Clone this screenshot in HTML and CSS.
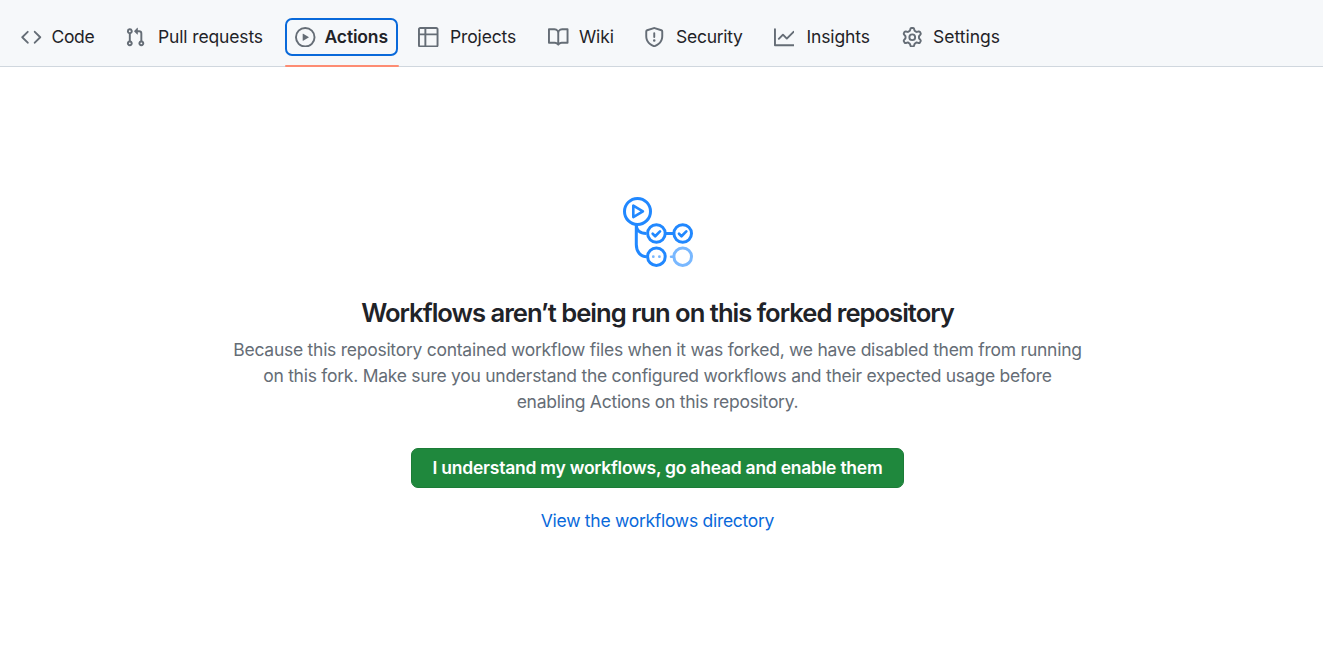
FILE: index.html
```html
<!DOCTYPE html>
<html lang="en">
<head>
<meta charset="utf-8">
<title>Actions</title>
<link rel="stylesheet" href="styles.css">
</head>
<body>
<nav class="tabs">
  <a class="tab tab-code"><svg class="icon" viewBox="0 0 16 16"><path d="m11.28 3.22 4.25 4.25a.75.75 0 0 1 0 1.06l-4.25 4.25a.749.749 0 0 1-1.275-.326.749.749 0 0 1 .215-.734L13.94 8l-3.72-3.72a.749.749 0 0 1 .326-1.275.749.749 0 0 1 .734.215Zm-6.56 0a.751.751 0 0 1 1.042.018.751.751 0 0 1 .018 1.042L2.06 8l3.72 3.72a.749.749 0 0 1-.326 1.275.749.749 0 0 1-.734-.215L.47 8.53a.75.75 0 0 1 0-1.06Z"/></svg><span class="label">Code</span></a>
  <a class="tab tab-pulls"><svg class="icon" viewBox="0 0 16 16"><path d="M1.5 3.25a2.25 2.25 0 1 1 3 2.122v5.256a2.251 2.251 0 1 1-1.5 0V5.372A2.25 2.25 0 0 1 1.5 3.25Zm5.677-.177L9.573.677A.25.25 0 0 1 10 .854V2.5h1A2.5 2.5 0 0 1 13.5 5v5.628a2.251 2.251 0 1 1-1.5 0V5a1 1 0 0 0-1-1h-1v1.646a.25.25 0 0 1-.427.177L7.177 3.427a.25.25 0 0 1 0-.354ZM3.75 2.5a.75.75 0 1 0 0 1.5.75.75 0 0 0 0-1.5Zm0 9.5a.75.75 0 1 0 0 1.5.75.75 0 0 0 0-1.5Zm8.25.75a.75.75 0 1 0 1.5 0 .75.75 0 0 0-1.5 0Z"/></svg><span class="label">Pull requests</span></a>
  <a class="tab tab-actions selected"><svg class="icon" viewBox="0 0 16 16"><path d="M8 0a8 8 0 1 1 0 16A8 8 0 0 1 8 0ZM1.5 8a6.5 6.5 0 1 0 13 0 6.5 6.5 0 0 0-13 0Zm4.879-2.773 4.264 2.559a.25.25 0 0 1 0 .428l-4.264 2.559A.25.25 0 0 1 6 10.559V5.442a.25.25 0 0 1 .379-.215Z"/></svg><span class="label">Actions</span></a>
  <a class="tab tab-projects"><svg class="icon" viewBox="0 0 16 16"><path d="M0 1.75C0 .784.784 0 1.75 0h12.5C15.216 0 16 .784 16 1.75v12.5A1.75 1.75 0 0 1 14.25 16H1.75A1.75 1.75 0 0 1 0 14.25ZM6.5 6.5v8h7.75a.25.25 0 0 0 .25-.25V6.5Zm8-1.5V1.75a.25.25 0 0 0-.25-.25H6.5V5Zm-13 1.5v7.75c0 .138.112.25.25.25H5v-8ZM5 5V1.5H1.75a.25.25 0 0 0-.25.25V5Z"/></svg><span class="label">Projects</span></a>
  <a class="tab tab-wiki"><svg class="icon" viewBox="0 0 16 16"><path d="M0 1.75A.75.75 0 0 1 .75 1h4.253c1.227 0 2.317.59 3 1.501A3.743 3.743 0 0 1 11.006 1h4.245a.75.75 0 0 1 .75.75v10.5a.75.75 0 0 1-.75.75h-4.507a2.25 2.25 0 0 0-1.591.659l-.622.621a.75.75 0 0 1-1.06 0l-.622-.621A2.25 2.25 0 0 0 5.258 13H.75a.75.75 0 0 1-.75-.75Zm7.251 10.324.004-5.073-.002-2.253A2.25 2.25 0 0 0 5.003 2.5H1.5v9h3.757a3.75 3.75 0 0 1 1.994.574ZM8.755 4.75l-.004 7.322a3.752 3.752 0 0 1 1.992-.572H14.5v-9h-3.495a2.25 2.25 0 0 0-2.25 2.25Z"/></svg><span class="label">Wiki</span></a>
  <a class="tab tab-security"><svg class="icon" viewBox="0 0 16 16"><path d="M7.467.133a1.748 1.748 0 0 1 1.066 0l5.25 1.68A1.75 1.75 0 0 1 15 3.48V7c0 1.566-.32 3.182-1.303 4.682-.983 1.498-2.585 2.813-5.032 3.855a1.697 1.697 0 0 1-1.33 0c-2.447-1.042-4.049-2.357-5.032-3.855C1.32 10.182 1 8.566 1 7V3.48a1.75 1.75 0 0 1 1.217-1.667Zm.61 1.429a.25.25 0 0 0-.153 0l-5.25 1.68a.25.25 0 0 0-.174.238V7c0 1.358.275 2.666 1.057 3.86.784 1.194 2.121 2.34 4.366 3.297a.196.196 0 0 0 .154 0c2.245-.956 3.582-2.104 4.366-3.298C13.225 9.666 13.5 8.36 13.5 7V3.48a.251.251 0 0 0-.174-.237l-5.25-1.68ZM8.75 4.75v3a.75.75 0 0 1-1.5 0v-3a.75.75 0 0 1 1.5 0ZM9 10.5a1 1 0 1 1-2 0 1 1 0 0 1 2 0Z"/></svg><span class="label">Security</span></a>
  <a class="tab tab-insights"><svg class="icon" viewBox="0 0 16 16"><path d="M1.5 1.75V13.5h13.75a.75.75 0 0 1 0 1.5H.75a.75.75 0 0 1-.75-.75V1.75a.75.75 0 0 1 1.5 0Zm14.28 2.53-5.25 5.25a.75.75 0 0 1-1.06 0L7 7.06 4.28 9.78a.751.751 0 0 1-1.042-.018.751.751 0 0 1-.018-1.042l3.25-3.25a.75.75 0 0 1 1.06 0L10 7.94l4.72-4.72a.751.751 0 0 1 1.042.018.751.751 0 0 1 .018 1.042Z"/></svg><span class="label">Insights</span></a>
  <a class="tab tab-settings"><svg class="icon" viewBox="0 0 16 16"><path d="M8 0a8.2 8.2 0 0 1 .701.031C9.444.095 9.99.645 10.16 1.29l.288 1.107c.018.066.079.158.212.224.231.114.454.243.668.386.123.082.233.09.299.071l1.103-.303c.644-.176 1.392.021 1.82.63.27.385.506.792.704 1.218.315.675.111 1.422-.364 1.891l-.814.806c-.049.048-.098.147-.088.294.016.257.016.515 0 .772-.01.147.038.246.088.294l.814.806c.475.469.679 1.216.364 1.891a7.977 7.977 0 0 1-.704 1.217c-.428.61-1.176.807-1.82.63l-1.102-.302c-.067-.019-.177-.011-.3.071a5.909 5.909 0 0 1-.668.386c-.133.066-.194.158-.211.224l-.29 1.106c-.168.646-.715 1.196-1.458 1.26a8.006 8.006 0 0 1-1.402 0c-.743-.064-1.289-.614-1.458-1.26l-.289-1.106c-.018-.066-.079-.158-.212-.224a5.738 5.738 0 0 1-.668-.386c-.123-.082-.233-.09-.299-.071l-1.103.303c-.644.176-1.392-.021-1.82-.63a8.12 8.12 0 0 1-.704-1.218c-.315-.675-.111-1.422.363-1.891l.815-.806c.05-.048.098-.147.088-.294a6.214 6.214 0 0 1 0-.772c.01-.147-.038-.246-.088-.294l-.815-.806C.635 6.045.431 5.298.746 4.623a7.92 7.92 0 0 1 .704-1.217c.428-.61 1.176-.807 1.82-.63l1.102.302c.067.019.177.011.3-.071.214-.143.437-.272.668-.386.133-.066.194-.158.211-.224l.29-1.106C6.009.645 6.556.095 7.299.03 7.53.01 7.764 0 8 0Zm-.571 1.525c-.036.003-.108.036-.137.146l-.289 1.105c-.147.561-.549.967-.998 1.189-.173.086-.34.183-.5.29-.417.278-.97.423-1.529.27l-1.103-.303c-.109-.03-.175.016-.195.045-.22.312-.412.644-.573.99-.014.031-.021.11.059.19l.815.806c.411.406.562.957.53 1.456a4.709 4.709 0 0 0 0 .582c.032.499-.119 1.05-.53 1.456l-.815.806c-.081.08-.073.159-.059.19.162.346.353.677.573.989.02.03.085.076.195.046l1.102-.303c.56-.153 1.113-.008 1.53.27.161.107.328.204.501.29.447.222.85.629.997 1.189l.289 1.105c.029.109.101.143.137.146a6.6 6.6 0 0 0 1.142 0c.036-.003.108-.036.137-.146l.289-1.105c.147-.561.549-.967.998-1.189.173-.086.34-.183.5-.29.417-.278.97-.423 1.529-.27l1.103.303c.109.029.175-.016.195-.045.22-.313.411-.644.573-.99.014-.031.021-.11-.059-.19l-.815-.806c-.411-.406-.562-.957-.53-1.456a4.709 4.709 0 0 0 0-.582c-.032-.499.119-1.05.53-1.456l.815-.806c.081-.08.073-.159.059-.19a6.464 6.464 0 0 0-.573-.989c-.02-.03-.085-.076-.195-.046l-1.102.303c-.56.153-1.113.008-1.53-.27a4.44 4.44 0 0 0-.501-.29c-.447-.222-.85-.629-.997-1.189l-.289-1.105c-.029-.11-.101-.143-.137-.146a6.6 6.6 0 0 0-1.142 0ZM11 8a3 3 0 1 1-6 0 3 3 0 0 1 6 0ZM9.5 8a1.5 1.5 0 1 0-3.001.001A1.5 1.5 0 0 0 9.5 8Z"/></svg><span class="label">Settings</span></a>
</nav>
<main class="blank">
  <svg class="logo" viewBox="0 0 72 72" fill="none" stroke="#2188ff" stroke-width="3" stroke-linecap="round" stroke-linejoin="round">
    <circle cx="15.5" cy="15.4" r="13"/>
    <path d="M11.3 9.7v11.4l9.6-5.7z" stroke-width="2.6"/>
    <path d="M14.3 29v19.5c0 7 4 12.2 10.5 12.2M14.3 29c0 5 3.5 8.5 10 8.5M44 37.5h7" stroke-linecap="butt"/>
    <circle cx="34.4" cy="37.5" r="8.8"/>
    <circle cx="60.7" cy="37.5" r="8.8"/>
    <circle cx="34.4" cy="60.7" r="8.8"/>
    <path d="M30.7 37.8l2.5 2.4 4.8-4.8M57 37.8l2.5 2.4 4.8-4.8" stroke-width="2.7"/>
    <g stroke="#79b8ff"><circle cx="60.7" cy="60.7" r="8.8"/><path d="M49 60.7h2.5" stroke-width="2.4"/><path d="M31.3 60.7h.01M37.4 60.7h.01" stroke-width="2.8"/></g>
  </svg>
  <h1 class="title">Workflows aren’t being run on this forked repository</h1>
  <p class="text">Because this repository contained workflow files when it was forked, we have disabled them from running<br>on this fork. Make sure you understand the configured workflows and their expected usage before<br>enabling Actions on this repository.</p>
  <button class="enable">I understand my workflows, go ahead and enable them</button>
  <a class="link">View the workflows directory</a>
</main>
</body>
</html>
```
FILE: styles.css
```css
* { box-sizing: border-box; }
body { margin: 0; height: 646px; overflow: hidden; background: #fff; color: #1f2328; font-family: Inter, "Liberation Sans", sans-serif; font-size: 17.5px; }
.tabs { display: flex; width: 1323px; height: 67px; padding: 18px 0 0 11px; background: #f6f8fa; border-bottom: 1.5px solid #d0d7de; }
.tab { display: flex; align-items: center; flex: none; height: 38px; padding-left: 10px; white-space: nowrap; }
.label { padding-bottom: 2px; letter-spacing: -0.14px; }
.icon { flex: none; width: 20.5px; height: 20.5px; margin-right: 10.5px; fill: #656d76; }
.tab-code { width: 104px; }
.tab-code .icon { margin-right: 10px; }
.tab-code .label { letter-spacing: -0.35px; }
.tab-pulls { width: 170px; }
.tab-pulls .icon { margin-right: 12.5px; }
.tab-actions { width: 113px; margin-right: 10px; }
.tab-projects { width: 130px; }
.tab-wiki { width: 96px; }
.tab-security { width: 129.5px; }
.tab-security .label { letter-spacing: -0.26px; }
.tab-insights { width: 128px; }
.tab-projects .icon, .tab-security .icon { margin-right: 11.5px; }
.tab-insights .icon { margin-right: 12.5px; }
.tab-settings .icon { margin-right: 11px; }
.tab-settings .label { letter-spacing: 0; }
.selected { position: relative; padding-left: 8px; border: 2px solid #0969da; border-radius: 7px; font-weight: 600; }
.selected .icon { margin-right: 9px; }
.selected::after { content: ""; position: absolute; left: -2px; bottom: -13px; width: 114px; height: 2.5px; border-radius: 1px; background: #fd8c73; }
.blank { display: flex; flex-direction: column; align-items: center; width: 1315px; padding-top: 129px; text-align: center; white-space: nowrap; }
.logo { width: 72px; height: 72px; }
.title { margin: 26px 0 0; font-size: 25.6px; line-height: 38px; font-weight: 600; letter-spacing: -1px; }
.text { margin: 5px 0 0; line-height: 26px; color: #656d76; letter-spacing: -0.26px; }
.enable { width: 493px; height: 40px; margin-top: 33px; padding: 0 0 2px; border: 1px solid #1c7c37; border-radius: 7px; background: #1f883d; color: #fff; font: 600 17.5px Inter, "Liberation Sans", sans-serif; letter-spacing: -0.24px; }
.link { margin-top: 20px; line-height: 26px; color: #0969da; letter-spacing: -0.28px; }
```
